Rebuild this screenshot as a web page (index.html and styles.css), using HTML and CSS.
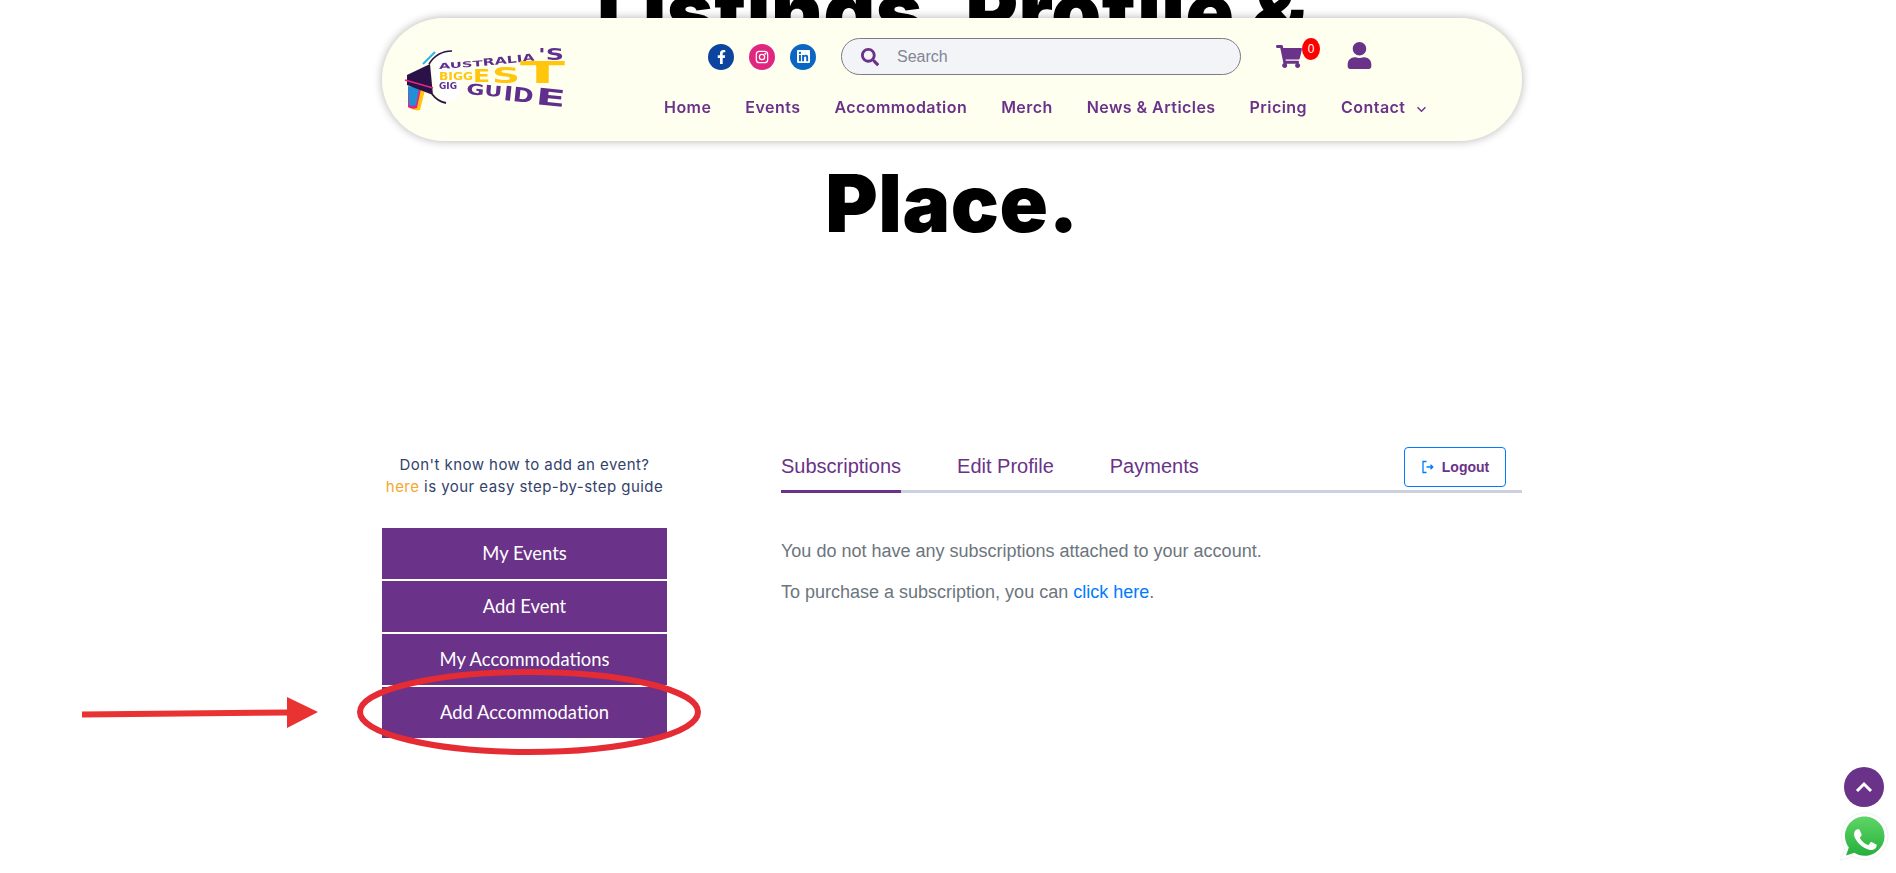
FILE: index.html
```html
<!DOCTYPE html>
<html lang="en">
<head>
  <meta charset="UTF-8">
  <meta name="viewport" content="width=device-width, initial-scale=1.0">
  <title>Australia's Biggest Gig Guide - Dashboard</title>
  <link rel="stylesheet" href="styles.css">
</head>
<body>

  <header class="site-header">
    <a href="#" class="logo">
      <svg width="180" height="80" viewBox="0 0 180 80">
        <!-- megaphone -->
        <path d="M16 47l14 3-5 20c-3 1-6 0-8-1z" fill="#ffc60b"/>
        <path d="M13 47l13 2-4 19c-3 1-7 1-9-1z" fill="#e5257f"/>
        <path d="M13 46l11 2-3 17c-3 1-5 1-7 0z" fill="#1f8fd8"/>
        <path d="M12 35L35 24 38 55 12 45z" fill="#2a1248"/>
        <path d="M10 40l28 8" stroke="#e5257f" stroke-width="1.6" fill="none"/>
        <path d="M28 24L40 12" stroke="#2fb8e6" stroke-width="2.2" fill="none"/>
        <ellipse cx="52" cy="37" rx="13" ry="25" transform="rotate(-10 52 37)" fill="#fff"/>
        <path d="M34 24C39 16 47 11 57 11" stroke="#2a1248" stroke-width="1.6" fill="none"/>
        <path d="M37 54C40 58 45 62 51 63" stroke="#2a1248" stroke-width="1.8" fill="none"/>
        <!-- wordmark -->
        <g class="logo-purple">
          <text x="44" y="29" font-size="8" textLength="44" lengthAdjust="spacingAndGlyphs" transform="rotate(-4 44 29)">AUST</text>
          <text x="88" y="26" font-size="10" textLength="52" lengthAdjust="spacingAndGlyphs" transform="rotate(-6 88 26)">RALIA</text>
          <text x="143" y="20" font-size="16" textLength="26" lengthAdjust="spacingAndGlyphs">'S</text>
          <text x="44" y="49" font-size="9.500" textLength="18" lengthAdjust="spacingAndGlyphs">GIG</text>
          <text x="71" y="54" font-size="15" textLength="36" lengthAdjust="spacingAndGlyphs" transform="rotate(5 71 54)">GU</text>
          <text x="108" y="60" font-size="20" textLength="30" lengthAdjust="spacingAndGlyphs" transform="rotate(6 108 60)">ID</text>
          <text x="140" y="64" font-size="23" textLength="30" lengthAdjust="spacingAndGlyphs" transform="rotate(6 140 64)">E</text>
        </g>
        <g class="logo-yellow">
          <text x="44" y="40" font-size="11" textLength="34" lengthAdjust="spacingAndGlyphs">BIGG</text>
          <text x="78" y="42" font-size="17" textLength="17" lengthAdjust="spacingAndGlyphs">E</text>
          <text x="97" y="43" font-size="21" textLength="28" lengthAdjust="spacingAndGlyphs">S</text>
          <text x="125" y="43" font-size="30" textLength="45" lengthAdjust="spacingAndGlyphs">T</text>
        </g>
      </svg>
    </a>

    <div class="header-right">
      <div class="header-top">
        <div class="socials">
          <a href="#" class="social fb">
            <svg viewBox="0 0 320 512" width="9" height="14"><path d="M279.14 288l14.22-92.66h-88.91v-60.13c0-25.35 12.42-50.06 52.24-50.06h40.42V6.26S260.43 0 225.36 0c-73.22 0-121.08 44.38-121.08 124.72v70.62H22.89V288h81.39v224h100.17V288z"/></svg>
          </a>
          <a href="#" class="social ig">
            <svg viewBox="0 0 16 16" width="14" height="14" fill="none" stroke="#fff" stroke-width="1.4"><rect x="1.5" y="1.5" width="13" height="13" rx="3.5"/><circle cx="8" cy="8" r="3"/><circle cx="11.8" cy="4.2" r=".5" fill="#fff"/></svg>
          </a>
          <a href="#" class="social li">
            <svg viewBox="0 0 448 512" width="13" height="15"><path d="M416 32H31.9C14.3 32 0 46.5 0 64.3v383.4C0 465.5 14.3 480 31.9 480H416c17.6 0 32-14.5 32-32.3V64.3c0-17.8-14.4-32.3-32-32.3zM135.4 416H69V202.2h66.5V416zm-33.2-243c-21.3 0-38.5-17.3-38.5-38.5S80.9 96 102.2 96c21.2 0 38.5 17.3 38.5 38.5 0 21.3-17.2 38.5-38.5 38.5zm282.1 243h-66.4V312c0-24.8-.5-56.7-34.5-56.7-34.6 0-39.9 27-39.9 54.9V416h-66.4V202.2h63.7v29.2h.9c8.9-16.8 30.6-34.5 62.9-34.5 67.2 0 79.7 44.3 79.7 101.9V416z"/></svg>
          </a>
        </div>

        <form class="search">
          <svg viewBox="0 0 512 512" width="18" height="18"><path d="M505 442.7L405.3 343c-4.5-4.5-10.6-7-17-7H372c27.6-35.3 44-79.7 44-128C416 93.1 322.9 0 208 0S0 93.1 0 208s93.1 208 208 208c48.3 0 92.7-16.4 128-44v16.3c0 6.4 2.5 12.5 7 17l99.7 99.7c9.4 9.4 24.6 9.4 33.9 0l28.3-28.3c9.4-9.4 9.4-24.6.1-34zM208 336c-70.7 0-128-57.2-128-128 0-70.7 57.2-128 128-128 70.7 0 128 57.2 128 128 0 70.7-57.2 128-128 128z"/></svg>
          <input type="text" placeholder="Search">
        </form>

        <a href="#" class="cart">
          <svg viewBox="0 0 576 512" width="26" height="23"><path d="M528.12 301.319l47.273-208C578.806 78.301 567.391 64 551.99 64H159.208l-9.166-44.81C147.758 8.021 137.93 0 126.529 0H24C10.745 0 0 10.745 0 24v16c0 13.255 10.745 24 24 24h69.883l70.248 343.435C147.325 417.1 136 435.222 136 456c0 30.928 25.072 56 56 56s56-25.072 56-56c0-15.674-6.447-29.835-16.824-40h209.647C430.447 426.165 424 440.326 424 456c0 30.928 25.072 56 56 56s56-25.072 56-56c0-22.172-12.888-41.332-31.579-50.405l5.517-24.276c3.413-15.018-8.002-29.319-23.403-29.319H218.117l-6.545-32h293.145c11.206 0 20.92-7.754 23.403-18.681z"/></svg>
          <span class="badge">0</span>
        </a>

        <a href="#" class="account">
          <svg viewBox="0 0 448 512" width="25" height="27"><path d="M224 256c70.7 0 128-57.3 128-128S294.7 0 224 0 96 57.3 96 128s57.3 128 128 128zm89.6 32h-16.7c-22.2 10.2-46.9 16-72.9 16s-50.6-5.8-72.9-16h-16.7C60.2 288 0 348.2 0 422.4V464c0 26.5 21.5 48 48 48h352c26.5 0 48-21.5 48-48v-41.6c0-74.2-60.2-134.4-134.4-134.4z"/></svg>
        </a>
      </div>

      <nav class="main-nav">
        <a href="#">Home</a>
        <a href="#">Events</a>
        <a href="#">Accommodation</a>
        <a href="#">Merch</a>
        <a href="#">News &amp; Articles</a>
        <a href="#">Pricing</a>
        <a href="#" class="has-sub">Contact
          <svg viewBox="0 0 12 8" width="11" height="7" fill="none" stroke="#6a3289" stroke-width="1.6"><path d="M1.5 1.5L6 6l4.5-4.5"/></svg>
        </a>
      </nav>
    </div>
  </header>

  <div class="wrap">
    <h1 class="hero-title">Listings, Profile &amp;<br>&nbsp;<br>Place.</h1>

    <div class="dashboard">
      <aside class="sidebar">
        <p class="help">Don't know how to add an event?<br><a href="#">here</a> is your easy step-by-step guide</p>
        <div class="side-buttons">
          <a href="#">My Events</a>
          <a href="#">Add Event</a>
          <a href="#">My Accommodations</a>
          <a href="#">Add Accommodation</a>
        </div>
      </aside>

      <section class="account-panel">
        <div class="tabs">
          <a href="#" class="tab active">Subscriptions</a>
          <a href="#" class="tab">Edit Profile</a>
          <a href="#" class="tab">Payments</a>
          <a href="#" class="logout">
            <svg viewBox="0 0 14 14" width="14" height="14" fill="none" stroke="#007bff" stroke-width="1.3"><path d="M5.5 1.5H2v11h3.500"/><path d="M5.500 7h6M9.500 4.800L11.800 7 9.500 9.200"/></svg>
            Logout
          </a>
        </div>
        <p class="note">You do not have any subscriptions attached to your account.</p>
        <p class="note">To purchase a subscription, you can <a href="#">click here</a>.</p>
      </section>
    </div>
  </div>

  <!-- red markup drawn over the screenshot -->
  <svg class="markup" width="720" height="110" viewBox="0 0 720 110">
    <path d="M22 64.500L229 62.500" stroke="#e93232" stroke-width="6" fill="none"/>
    <path d="M227 47L258 62 227 78z" fill="#e93232"/>
    <ellipse cx="469" cy="62" rx="169" ry="40" fill="none" stroke="#e52b33" stroke-width="6"/>
  </svg>

  <a href="#" class="to-top">
    <svg viewBox="0 0 18 12" width="18" height="12" fill="none" stroke="#fff" stroke-width="3"><path d="M2 10l7-7 7 7"/></svg>
  </a>

  <a href="#" class="whatsapp">
    <svg viewBox="0 0 50 50" width="50" height="50">
      <defs>
        <linearGradient id="wa" x1="0" y1="0" x2="0" y2="1">
          <stop offset="0" stop-color="#5fd568"/>
          <stop offset="1" stop-color="#25b03b"/>
        </linearGradient>
      </defs>
      <path d="M25.500 1C12.500 1 2.500 11 2.500 24c0 4.500 1.300 8.700 3.500 12.300L1 48.500l12.800-4.100C17 46.300 21.200 47.500 25.500 47.500 38.300 47.500 49 37 49 24S38.300 1 25.500 1z" fill="#fff" stroke="#ececec" stroke-width=".8"/>
      <path d="M25.500 4.500C14.700 4.500 6 13.200 6 24c0 4.300 1.500 8.300 3.800 11.500L7 43.500l8.300-2.700c3 1.900 6.500 3 10.200 3C36.300 43.800 45.500 35 45.500 24S36.300 4.500 25.500 4.500z" fill="url(#wa)"/>
      <g transform="translate(4 2) scale(.1)">
        <path fill="#fff" d="M325.100 300.500c-5.500-2.800-32.800-16.200-37.900-18-5.100-1.900-8.800-2.800-12.500 2.800-3.700 5.600-14.300 18-17.600 21.800-3.200 3.700-6.500 4.200-12 1.400-32.600-16.300-54-29.100-75.500-66-5.700-9.800 5.700-9.100 16.300-30.300 1.800-3.700.9-6.900-.5-9.700-1.400-2.800-12.500-30.100-17.100-41.200-4.500-10.800-9.100-9.300-12.500-9.500-3.200-.2-6.900-.2-10.600-.2-3.700 0-9.700 1.400-14.800 6.900-5.100 5.600-19.400 19-19.400 46.300 0 27.300 19.900 53.700 22.600 57.400 2.800 3.700 39.100 59.700 94.800 83.800 35.200 15.200 49 16.500 66.600 13.900 10.700-1.600 32.800-13.400 37.400-26.400 4.600-13 4.600-24.100 3.200-26.400-1.300-2.500-5-3.900-10.500-6.600z"/>
      </g>
    </svg>
  </a>

</body>
</html>
```

FILE: styles.css
```css
html, body {
  height: 100%;
  overflow: hidden;
}

body {
  margin: 0;
  background-color: #fff;
  font-family: "Liberation Sans", Arial, sans-serif;
}

a {
  text-decoration: none;
}

/* header */
.site-header {
  position: fixed;
  top: 18px;
  left: 382px;
  width: 1140px;
  height: 123px;
  box-sizing: border-box;
  display: flex;
  background-color: #fffff0;
  border-radius: 62px;
  box-shadow: 0 0 10px rgba(0, 0, 0, 0.3);
  z-index: 10;
}

.logo {
  position: absolute;
  left: 13px;
  top: 22px;
  height: 80px;
}

.logo text {
  font-family: "DejaVu Sans", sans-serif;
  font-weight: 700;
}

.logo-purple {
  fill: #5f2f8e;
}

.logo-yellow {
  fill: #ffc60b;
}

.header-right {
  margin-left: 326px;
  display: flex;
  flex-direction: column;
}

.header-top {
  margin-top: 20px;
  height: 37px;
  display: flex;
  align-items: center;
}

.socials {
  display: flex;
  gap: 15px;
  margin-right: 25px;
}

.social {
  width: 26px;
  height: 26px;
  border-radius: 50%;
  display: flex;
  align-items: center;
  justify-content: center;
  fill: #fff;
}

.fb {
  background-color: #0c44a0;
}

.ig {
  background-color: #e0267f;
}

.li {
  background-color: #0a66c2;
}

.search {
  width: 400px;
  height: 37px;
  box-sizing: border-box;
  display: flex;
  align-items: center;
  gap: 18px;
  padding-left: 19px;
  background-color: #f3f4f8;
  border: 1px solid #7c7c86;
  border-radius: 19px;
  fill: #6a3289;
}

.search input {
  flex: 1;
  border: none;
  outline: none;
  background: none;
  padding: 0;
  font-family: "Liberation Sans", Arial, sans-serif;
  font-size: 16px;
}

.search input::placeholder {
  color: #7f8694;
  opacity: 1;
}

.cart {
  position: relative;
  display: block;
  height: 23px;
  margin-left: 35px;
  fill: #6a3289;
}

.badge {
  position: absolute;
  top: -7px;
  left: 26px;
  width: 18px;
  height: 22px;
  border-radius: 50%;
  background-color: #f00;
  color: #fff;
  font-size: 12px;
  line-height: 22px;
  text-align: center;
}

.account {
  display: block;
  height: 27px;
  margin-left: 45px;
  margin-top: -3px;
  fill: #6a3289;
}

.main-nav {
  margin-top: 21px;
  display: flex;
  gap: 34px;
  margin-left: -44px;
}

.main-nav a {
  color: #6a3289;
  font-family: Inter, sans-serif;
  font-size: 16px;
  font-weight: 600;
  letter-spacing: 0.45px;
  line-height: 22px;
  white-space: nowrap;
}

.has-sub svg {
  margin-left: 6px;
}

/* page */
.wrap {
  width: 1140px;
  margin-left: 382px;
}

.hero-title {
  margin: -37px 0 0;
  font-family: Inter, sans-serif;
  font-size: 80px;
  font-weight: 900;
  letter-spacing: 0.5px;
  line-height: 96px;
  text-align: center;
  color: #000;
}

.dashboard {
  display: flex;
  gap: 114px;
  margin-top: 196px;
}

.sidebar {
  width: 285px;
  flex-shrink: 0;
}

.help {
  margin: 7px 0 30px;
  font-family: Inter, sans-serif;
  font-size: 15px;
  letter-spacing: 0.45px;
  line-height: 22px;
  text-align: center;
  color: #33426b;
}

.help a {
  color: #f5a62e;
}

.side-buttons {
  display: flex;
  flex-direction: column;
  gap: 2px;
}

.side-buttons a {
  height: 51px;
  box-sizing: border-box;
  padding-bottom: 2px;
  display: flex;
  align-items: center;
  justify-content: center;
  background-color: #6a3289;
  color: #fff;
  font-family: Lato, sans-serif;
  font-size: 18.4px;
}

.account-panel {
  flex: 1;
}

.tabs {
  height: 43px;
  display: flex;
  align-items: flex-start;
  gap: 56px;
  border-bottom: 3px solid #cdd0de;
}

.tab {
  height: 43px;
  box-sizing: border-box;
  padding-top: 7px;
  color: #6a3289;
  font-size: 20px;
  line-height: 24px;
}

.tab.active {
  height: 46px;
  border-bottom: 3px solid #6a3289;
}

.logout {
  margin-left: auto;
  margin-right: 16px;
  width: 102px;
  height: 40px;
  box-sizing: border-box;
  display: flex;
  align-items: center;
  justify-content: center;
  gap: 7px;
  border: 1px solid #007bff;
  border-radius: 4px;
  color: #6a3289;
  font-size: 14px;
  font-weight: 700;
}

.note {
  margin: 0 0 17px;
  color: #6c757d;
  font-size: 18px;
  line-height: 24px;
}

.account-panel .tabs + .note {
  margin-top: 46px;
}

.note a {
  color: #007bff;
}

/* overlays */
.markup {
  position: absolute;
  left: 60px;
  top: 650px;
  pointer-events: none;
}

.to-top {
  position: fixed;
  left: 1844px;
  top: 767px;
  width: 40px;
  height: 40px;
  border-radius: 50%;
  background-color: #6a3289;
  display: flex;
  align-items: center;
  justify-content: center;
}

.whatsapp {
  position: fixed;
  left: 1839px;
  top: 812px;
  height: 50px;
}
```
